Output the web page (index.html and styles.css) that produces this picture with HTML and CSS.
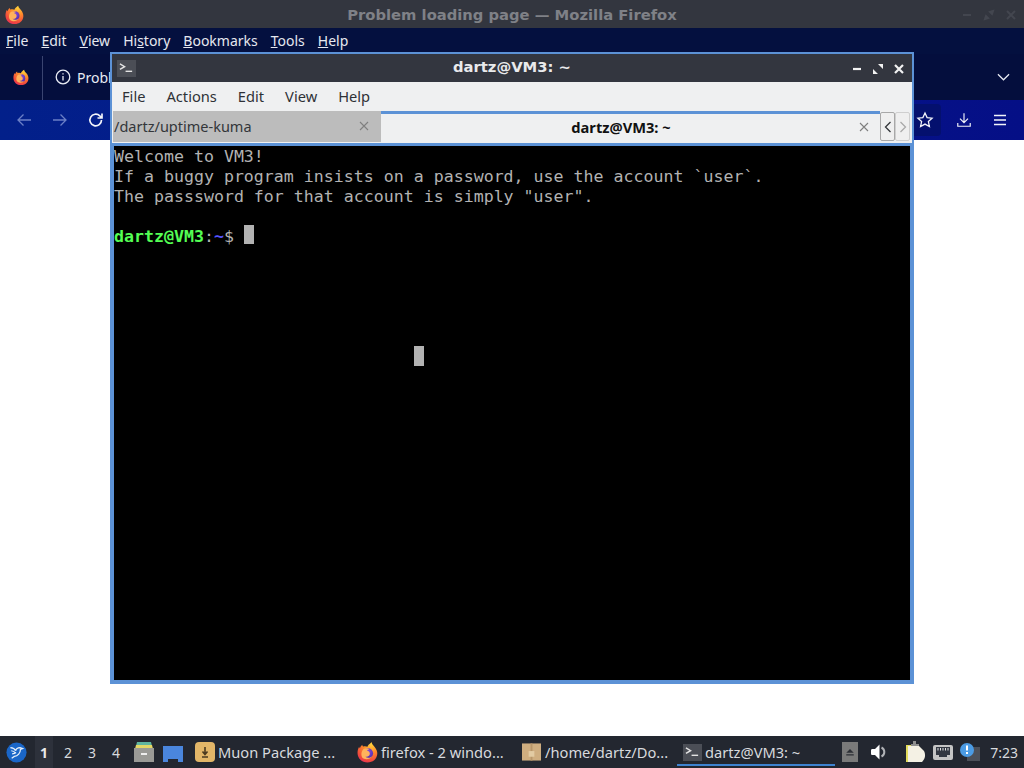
FILE: index.html
```html
<!DOCTYPE html>
<html lang="en">
<head>
<meta charset="utf-8">
<title>Desktop</title>
<link rel="stylesheet" href="styles.css">
</head>
<body>
<svg class="defs" width="0" height="0">
  <defs>
    <radialGradient id="foxBody" cx="0.7" cy="0.1" r="1.050">
      <stop offset="0" stop-color="#ffd23a"/>
      <stop offset="0.4" stop-color="#ff8a2b"/>
      <stop offset="0.8" stop-color="#f0453f"/>
      <stop offset="1" stop-color="#e02a6a"/>
    </radialGradient>
    <radialGradient id="foxGlobe" cx="0.5" cy="0.35" r="0.7">
      <stop offset="0" stop-color="#8a4fe0"/>
      <stop offset="1" stop-color="#4b2aa8"/>
    </radialGradient>
    <symbol id="fox" viewBox="0 0 20 20">
      <path d="M14 0.500c0.300 2 1.500 2.500 2.800 4.200 1.800 2.300 2.700 4.300 2.500 6.800-0.400 5-4.300 8-9.300 8-5.300 0-9.400-3.800-9.500-9 0-1.800 0.300-3.800 1.500-6 0.200 0.800 0.500 1.200 0.800 1.500 0.300-1.500 1.200-2.700 2.300-3.400 0 1 0.300 1.500 0.900 1.700 1.500-0.500 3-0.200 4 0.300 0-1.700 2-2.400 4-4.600z" fill="url(#foxBody)"/>
      <circle cx="10.500" cy="10.800" r="4.800" fill="url(#foxGlobe)"/>
      <path d="M6 6.800c2-1.200 4.500-1 5.800 0 -1 0.300-1.800 0.500-2.300 1.300 1.500 0.200 3 1.600 2.700 3.400-0.300 2-2.200 3-4.200 2.500 1.500 1.500 4.700 1.500 6.300-0.700-1.400 3-5.400 4-8.100 2.400C3.700 14.300 3.500 9.500 6 6.800z" fill="#ffb35c"/>
    </symbol>
  </defs>
</svg>
<div class="desktop">
  <section class="firefox">
    <header class="ff-title">
      <svg class="ff-logo-big" viewBox="0 0 20 20"><use href="#fox"/></svg>
      <span class="ff-title-text">Problem loading page — Mozilla Firefox</span>
      <div class="ff-controls">
        <svg viewBox="0 0 12 12"><path d="M2 6h8" /></svg>
        <svg viewBox="0 0 12 12"><path d="M2 10l3-1-2-2zM10 2L7 3l2 2z" /></svg>
        <svg viewBox="0 0 12 12"><path d="M2 2l8 8M10 2l-8 8" /></svg>
      </div>
    </header>
    <nav class="ff-menu">
      <span><u>F</u>ile</span><span><u>E</u>dit</span><span><u>V</u>iew</span><span>Hi<u>s</u>tory</span><span><u>B</u>ookmarks</span><span><u>T</u>ools</span><span><u>H</u>elp</span>
    </nav>
    <div class="ff-tabs">
      <div class="ff-pinned"><svg class="ff-logo-small" viewBox="0 0 20 20"><use href="#fox"/></svg></div>
      <div class="ff-tab">
        <svg class="ff-info" viewBox="0 0 16 16"><circle cx="8" cy="8" r="6.800"/><path d="M8 7v4.600M8 4.200v1.200"/></svg>
        <span>Problem loading page</span>
      </div>
      <svg class="ff-chevron" viewBox="0 0 14 8"><path d="M1 1l6 6 6-6"/></svg>
    </div>
    <div class="ff-nav">
      <svg class="nav-icon dim" viewBox="0 0 16 16"><path d="M15 8H2M7.500 2.500L2 8l5.500 5.500"/></svg>
      <svg class="nav-icon dim" viewBox="0 0 16 16"><path d="M1 8h13M8.500 2.500L14 8l-5.500 5.500"/></svg>
      <svg class="nav-icon strong" viewBox="0 0 16 16"><path d="M13.500 8a5.800 5.800 0 1 1-1.700-4.100L14 6M14 1.500V6H9.500"/></svg>
      <div class="urlbar">
        <svg class="nav-icon star" viewBox="0 0 18 18"><path d="M9 2l2.100 4.600 5 .6-3.700 3.400 1 5L9 13.100l-4.400 2.500 1-5L1.900 7.200l5-.6z"/></svg>
      </div>
      <svg class="nav-icon" viewBox="0 0 18 18"><path d="M9 1.500v10M4.500 7.500L9 12l4.500-4.500M2 12.500v3.500h14v-3.500"/></svg>
      <svg class="nav-icon" viewBox="0 0 16 16"><path d="M2 3.500h12M2 8h12M2 12.500h12"/></svg>
    </div>
    <main class="ff-page"></main>
  </section>

  <section class="terminal">
    <header class="term-title">
      <span class="term-icon"><svg viewBox="0 0 18 16"><path d="M2 3l5 3-5 3" /><path d="M8 11h7" /></svg></span>
      <span class="term-title-text">dartz@VM3: ~</span>
      <div class="term-controls">
        <svg viewBox="0 0 12 12"><path d="M2 6h8"/></svg>
        <svg viewBox="0 0 12 12" class="filled"><path d="M1 11V6l5 5zM11 1v5L6 1z"/></svg>
        <svg viewBox="0 0 12 12"><path d="M2 2l8 8M10 2l-8 8"/></svg>
      </div>
    </header>
    <nav class="term-menu">
      <span>File</span><span>Actions</span><span>Edit</span><span>View</span><span>Help</span>
    </nav>
    <div class="term-tabs">
      <div class="term-tab inactive">
        <span>/dartz/uptime-kuma</span>
        <svg class="tab-x" viewBox="0 0 10 10"><path d="M1 1l8 8M9 1l-8 8"/></svg>
      </div>
      <div class="term-tab active">
        <span class="tab-label">dartz@VM3: ~</span>
        <svg class="tab-x" viewBox="0 0 10 10"><path d="M1 1l8 8M9 1l-8 8"/></svg>
      </div>
      <div class="tab-scroll">
        <span class="scroll-btn"><svg viewBox="0 0 8 14"><path d="M6.500 2L1.500 7l5 5"/></svg></span>
        <span class="scroll-btn off"><svg viewBox="0 0 8 14"><path d="M1.500 2l5 5-5 5"/></svg></span>
      </div>
    </div>
    <div class="term-screen">
<pre class="term-text">Welcome to VM3!
If a buggy program insists on a password, use the account `user`.
The passsword for that account is simply "user".

<b class="p-user">dartz@VM3</b>:<b class="p-path">~</b>$ <i class="cursor"></i></pre>
      <i class="mouse-block"></i>
    </div>
  </section>

  <footer class="panel">
    <div class="start"><svg viewBox="0 0 24 24"><circle cx="12" cy="12" r="11.500" fill="#1a66c8"/><path d="M5 6.500c3 .3 5 1.500 6 3.500M6 10c2 .2 3.500 1 5 2.500M7 13.500c2 0 3.500-.5 4.500-1.500M11 10c.5-2 2.500-3.500 5-3.500l3 1-2.500 1c0 4-3 7.500-7 8l-3 2" fill="none" stroke="#e8f1fb" stroke-width="1.400"/></svg></div>
    <div class="pager"><span class="current">1</span><span>2</span><span>3</span><span>4</span></div>
    <div class="launchers">
      <svg class="drawer" viewBox="0 0 22 20"><path d="M4 0h14l1 4H3z" fill="#5fb5a0"/><path d="M3 3h16l1 4H2z" fill="#e3d766"/><path d="M1 6h20v14H1z" fill="#9a9a96"/><path d="M8 11h6v2H8z" fill="#eee"/></svg>
      <svg class="folder" viewBox="0 0 20 16"><path d="M0 0h20v16h-5v-3H5v3H0z" fill="#4a86dd"/></svg>
    </div>
    <div class="task muon">
      <svg viewBox="0 0 20 20"><rect x="0" y="0" width="20" height="20" rx="4" fill="#e2b668"/><path d="M10 5v7M7.500 9.500L10 12.500l2.500-3M7 15h6" stroke="#4a3a20" stroke-width="1.600" fill="none"/></svg>
      <span>Muon Package ...</span>
    </div>
    <div class="task fox">
      <svg viewBox="0 0 20 20"><use href="#fox"/></svg>
      <span>firefox - 2 windo...</span>
    </div>
    <div class="task files">
      <svg viewBox="0 0 20 20"><path d="M0 1h20v18H0z" fill="#cfae80"/><path d="M9 1h2v18H9z" fill="#b8966a"/><path d="M7 9h6v6H7z" fill="#e2cba3"/></svg>
      <span>/home/dartz/Do...</span>
    </div>
    <div class="task term">
      <span class="task-term-icon"><svg viewBox="0 0 18 16"><path d="M2 3l5 3-5 3"/><path d="M8 11h7"/></svg></span>
      <span>dartz@VM3: ~</span>
    </div>
    <div class="tray">
      <span class="eject"><svg viewBox="0 0 16 16"><path d="M8 4l5 5H3zM3 11h10v1.500H3z"/></svg></span>
      <svg class="tray-sound" viewBox="0 0 16 16"><path d="M0 6.500C0 5.500.5 5 1.500 5H4l4.500-4.500v15L4 11H1.500C.5 11 0 10.500 0 9.500z" fill="#fff"/><path d="M10.500 3.500a5 5 0 0 1 0 9" stroke="#b0b2b6" stroke-width="2" fill="none"/></svg>
      <svg class="tray-clip" viewBox="0 0 20 22"><path d="M0 4h13v17H0z" fill="#e4dc5c"/><path d="M2 5h11l5 5c2 4 1 8-2 11H2z" fill="#f4f1e4"/><path d="M7 0h3v3h3v2H5V3h2z" fill="#8f8f8f"/></svg>
      <svg class="tray-net" viewBox="0 0 20 17"><rect width="20" height="15" y="1" rx="2" fill="#c4c4c4"/><path d="M3 3h14v8h-3v2H6v-2H3z" fill="#333842"/><path d="M4.500 4h1v2.500h-1zM7 4h1v2.500H7zM9.500 4h1v2.500h-1zM12 4h1v2.500h-1zM14.500 4h1v2.500h-1z" fill="#e4e4e4"/></svg>
      <svg class="tray-note" viewBox="0 0 20 18"><rect x="7" y="4" width="13" height="14" fill="#4c5059"/><circle cx="7" cy="7" r="7" fill="#4b9be4"/><path d="M6 2.500h2v5H6zM6 9h2v2H6z" fill="#fff"/></svg>
      <span class="clock">7:23</span>
    </div>
  </footer>
</div>
</body>
</html>
```

FILE: styles.css
```css
* { box-sizing: border-box; }
html, body { margin: 0; padding: 0; }
body { width: 1024px; height: 768px; overflow: hidden; background: #fff; font-family: "Noto Sans", sans-serif; }
.defs { position: absolute; }

.desktop { position: relative; width: 1024px; height: 768px; display: flex; flex-direction: column; }

/* Firefox window */
.firefox { flex: 1; display: flex; flex-direction: column; min-height: 0; }
.ff-title { height: 28px; flex: none; background: #33363f; display: flex; align-items: center; position: relative; padding: 1px 5px 0; }
.ff-logo-big { width: 19px; height: 20px; }
.ff-title-text { position: absolute; left: 0; right: 0; text-align: center; font: bold 14.750px "DejaVu Sans", sans-serif; color: #7f8187; }
.ff-controls { margin-left: auto; display: flex; gap: 10px; padding-right: 2px; }
.ff-controls svg { width: 12px; height: 12px; fill: #43464f; stroke: #43464f; stroke-width: 2; }
.ff-menu { height: 26px; flex: none; background: #04103f; color: #e6e8ef; display: flex; align-items: center; gap: 13px; padding: 0 6px 2px; font-size: 14px; }
.ff-tabs { height: 46px; flex: none; background: #040e3d; display: flex; align-items: flex-end; color: #e8ebf4; }
.ff-pinned { width: 43px; height: 44px; padding-bottom: 2px; display: flex; align-items: center; justify-content: center; border-right: 1px solid #3a4470; }
.ff-logo-small { width: 16px; height: 17px; }
.ff-tab { display: flex; align-items: center; gap: 6px; height: 44px; padding-bottom: 2px; padding-left: 12px; font-size: 14px; width: 320px; }
.ff-info { width: 16px; height: 16px; fill: none; stroke: #e8ebf4; stroke-width: 1.300; }
.ff-chevron { width: 13px; height: 8px; margin-left: auto; margin-right: 14px; margin-bottom: 19px; fill: none; stroke: #e8ebf4; stroke-width: 1.300; }
.ff-nav { height: 40px; flex: none; background: linear-gradient(90deg, #02208a, #06178c 50%, #050f86); display: flex; align-items: center; padding: 0 16px; gap: 20px; }
.nav-icon { width: 16px; height: 16px; fill: none; stroke: #f2f4fa; stroke-width: 1.300; flex: none; }
.nav-icon.dim { stroke: #6b7fc6; }
.nav-icon.strong { stroke-width: 1.700; }
.nav-icon.star { width: 18px; height: 18px; }
.urlbar { flex: 1; height: 32px; margin-right: -5px; background: #04106e; border-radius: 4px; display: flex; align-items: center; justify-content: flex-end; padding-right: 7px; }
.ff-page { flex: 1; background: #fff; }

/* Terminal window */
.terminal { position: absolute; left: 110px; top: 52px; width: 804px; height: 632px; border: 2px solid #5c92d6; background: #eff0f1; display: flex; flex-direction: column; }
.term-title { height: 28px; flex: none; background: #33363f; display: flex; align-items: center; position: relative; padding: 1px 5px 0; }
.term-icon { width: 19px; height: 17px; background: #4b4e56; display: flex; align-items: center; justify-content: center; }
.term-icon svg { width: 17px; height: 15px; fill: none; stroke: #e4e4e4; stroke-width: 1.500; }
.term-title-text { position: absolute; left: 0; right: 0; top: 4px; text-align: center; font: bold 14.750px "DejaVu Sans", sans-serif; color: #e9eaec; }
.term-controls { margin-left: auto; display: flex; gap: 9px; padding-right: 2px; }
.term-controls svg { width: 12px; height: 12px; stroke: #f2f2f2; stroke-width: 2.200; fill: none; }
.term-controls svg.filled { fill: #f2f2f2; stroke: none; }
.term-menu { height: 29px; flex: none; display: flex; align-items: center; gap: 21px; padding: 0 10px 2px; font-size: 14.670px; color: #2e3136; }
.term-tabs { height: 32px; flex: none; display: flex; align-items: flex-start; padding-left: 1px; }
.term-tab { display: flex; align-items: center; font-size: 14.670px; color: #33363a; }
.term-tab.inactive { width: 268px; background: #bcbcbc; padding: 0 12px 2px 1px; height: 31px; justify-content: space-between; font-size: 14.500px; }
.term-tab.active { width: 499px; height: 32px; background: #eff0f1; border-top: 3px solid #5c92d6; padding: 0 11px 3px 0; color: #111; font-weight: 700; }
.term-tab.active .tab-label { flex: 1; text-align: center; padding-left: 2px; }
.tab-x { width: 10px; height: 10px; stroke: #7f7f7f; stroke-width: 1.100; fill: none; flex: none; }
.tab-scroll { display: flex; align-items: center; padding-top: 1px; }
.scroll-btn { width: 15px; height: 29px; border: 1px solid #a8a8a8; border-radius: 2px; display: flex; align-items: center; justify-content: center; background: #efefef; }
.scroll-btn svg { width: 8px; height: 14px; fill: none; stroke: #33363a; stroke-width: 1.300; }
.scroll-btn.off { border-color: #cfcfcf; }
.scroll-btn.off svg { stroke: #a9a9a9; }
.term-screen { flex: 1; background: #000; border: solid #5c92d6; border-width: 3px 2px 2px; position: relative; min-height: 0; }
.term-text { margin: 0; padding: 1px 0 0; font: 16.600px/20px "DejaVu Sans Mono", monospace; color: #b2b2b2; }
.p-user { color: #54fe54; }
.p-path { color: #5454fe; }
.cursor { display: inline-block; position: relative; top: -2px; width: 10px; height: 19px; background: #b2b2b2; vertical-align: -4px; }
.mouse-block { position: absolute; left: 300px; top: 200px; width: 10px; height: 20px; background: #b2b2b2; }

/* Bottom panel */
.panel { height: 32px; flex: none; background: #232730; display: flex; align-items: center; color: #d8dade; font-size: 14.670px; }
.start { width: 32px; height: 32px; padding: 1px 0 0 1px; display: flex; align-items: center; justify-content: center; }
.start svg { width: 21px; height: 21px; }
.pager { display: flex; height: 32px; margin-left: 3px; gap: 6px; font-size: 14px; }
.pager span { width: 18px; display: flex; align-items: center; justify-content: center; }
.pager .current { background: #2d313b; font-weight: 700; color: #e8e8e8; }
.launchers { display: flex; align-items: center; gap: 8px; margin-left: 8px; }
.drawer { width: 22px; height: 20px; }
.folder { width: 20px; height: 16px; margin-top: 3px; }
.task { display: flex; align-items: center; height: 32px; flex: none; white-space: nowrap; }
.task svg { width: 20px; height: 20px; flex: none; }
.muon { width: 171px; padding-left: 12px; gap: 3px; }
.fox { width: 165px; padding-left: 3px; gap: 3px; }
.fox svg { width: 21px; height: 21px; }
.files { width: 158px; padding-left: 3px; gap: 4px; }
.files svg { width: 19px; }
.term { width: 158px; padding-left: 6px; gap: 3px; position: relative; }
.term::after { content: ""; position: absolute; left: 0; right: 0; bottom: 2px; height: 2px; background: #3e83d0; }
.task-term-icon { width: 19px; height: 17px; background: #4b4e56; display: flex; align-items: center; justify-content: center; }
.task-term-icon svg { width: 17px; height: 15px; fill: none; stroke: #e4e4e4; stroke-width: 1.500; }
.tray { display: flex; align-items: center; margin-left: auto; padding-right: 6px; height: 32px; }
.eject { width: 16px; height: 20px; background: #7a7a7a; display: flex; align-items: center; justify-content: center; }
.eject svg { width: 12px; height: 12px; fill: #2c2f36; }
.tray-sound { width: 16px; height: 16px; margin-left: 13px; }
.tray-clip { width: 20px; height: 22px; margin-left: 19px; }
.tray-net { width: 20px; height: 17px; margin-left: 7px; }
.tray-note { width: 20px; height: 18px; margin-left: 7px; }
.clock { margin-left: 10px; font-size: 14px; }
```
